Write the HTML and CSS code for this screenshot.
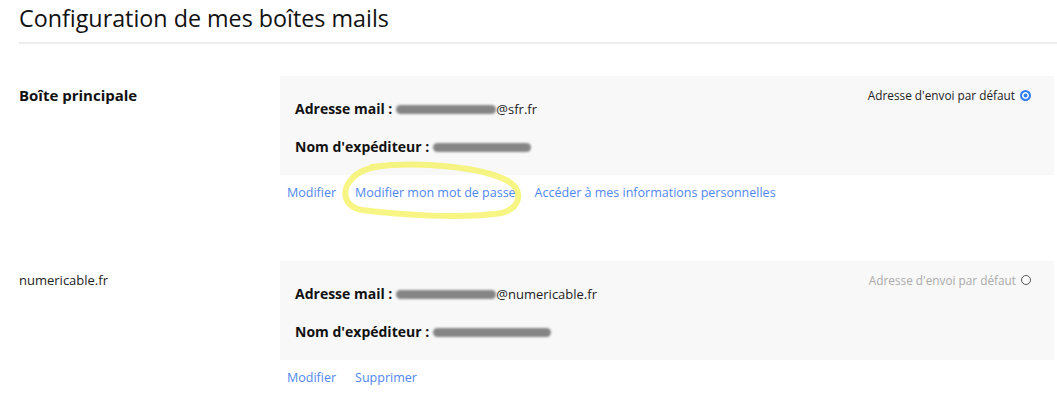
FILE: index.html
```html
<!DOCTYPE html>
<html lang="fr">
<head>
    <meta charset="UTF-8">
    <title>Configuration de mes boîtes mails</title>
    <link rel="stylesheet" href="styles.css">
</head>
<body>
<div class="page">
    <h1 class="page-title">Configuration de mes boîtes mails</h1>

    <section class="mailbox">
        <div class="mailbox-name main">Boîte principale</div>
        <div class="mailbox-body">
            <div class="card">
                <div class="fields">
                    <p class="field"><b>Adresse mail :</b> <span class="masked w100"></span>@sfr.fr</p>
                    <p class="field"><b>Nom d'expéditeur :</b> <span class="masked w98"></span></p>
                </div>
                <div class="default-choice">Adresse d'envoi par défaut <span class="radio checked"></span></div>
            </div>
            <div class="actions">
                <a href="#">Modifier</a>
                <a href="#">Modifier mon mot de passe</a>
                <a href="#">Accéder à mes informations personnelles</a>
            </div>
        </div>
    </section>

    <section class="mailbox">
        <div class="mailbox-name">numericable.fr</div>
        <div class="mailbox-body">
            <div class="card">
                <div class="fields">
                    <p class="field"><b>Adresse mail :</b> <span class="masked w100"></span>@numericable.fr</p>
                    <p class="field"><b>Nom d'expéditeur :</b> <span class="masked w118"></span></p>
                </div>
                <div class="default-choice off">Adresse d'envoi par défaut <span class="radio"></span></div>
            </div>
            <div class="actions">
                <a href="#">Modifier</a>
                <a href="#">Supprimer</a>
            </div>
        </div>
    </section>
</div>

<!-- surlignage à main levée -->
<svg class="scribble" width="1057" height="416" viewBox="0 0 1057 416">
    <path d="M372 167 C420 161 482 167 508 181 C523 190 522 207 502 213 C462 219 400 215 362 210 C341 206 343 188 351 180 C357 172 366 168 382 166"
          fill="none" stroke="#f4f25a" stroke-opacity="0.75" stroke-width="6" stroke-linecap="round"/>
</svg>
</body>
</html>
```

FILE: styles.css
```css
* {
    margin: 0;
    padding: 0;
    box-sizing: border-box;
}

body {
    font-family: "Open Sans", Arial, sans-serif;
    font-size: 13px;
    color: #222;
    background: #fff;
    overflow: hidden;
}

.page {
    padding-left: 19px;
}

.page-title {
    font-size: 23.3px;
    font-weight: 400;
    color: #111;
    line-height: 34px;
    padding-top: 1px;
    padding-bottom: 7px;
    border-bottom: 2px solid #ececec;
    margin-bottom: 32px;
}

.mailbox {
    display: flex;
    margin-bottom: 58px;
}

.mailbox:last-child {
    margin-bottom: 0;
}

.mailbox-name {
    width: 261px;
    flex-shrink: 0;
    line-height: 20px;
    padding-top: 9px;
}

.mailbox-name.main {
    font-weight: 700;
    font-size: 15px;
    color: #111;
}

.mailbox-body {
    flex: 1;
    margin-right: 3px;
}

.card {
    background: #f8f8f8;
    display: flex;
    justify-content: space-between;
    align-items: flex-start;
    padding: 9px 23px 18px 15px;
}

.fields {
    padding-top: 14px;
    display: flex;
    flex-direction: column;
    gap: 18px;
}

.field {
    line-height: 20px;
    display: flex;
    align-items: center;
}

.field b {
    font-size: 14px;
    color: #111;
    margin-right: 4px;
}

.masked {
    display: inline-block;
    height: 9px;
    background: #858585;
    border-radius: 5px;
    filter: blur(0.8px);
}

.w100 { width: 100px; }
.w98 { width: 98px; }
.w118 { width: 118px; }

.default-choice {
    font-size: 11.8px;
    line-height: 20px;
    display: flex;
    align-items: center;
    gap: 5px;
}

.default-choice.off {
    color: #aaa;
}

.radio {
    width: 10px;
    height: 10px;
    border-radius: 50%;
    border: 1px solid #555;
    background: #fff;
}

.radio.checked {
    width: 11px;
    height: 11px;
    border: 2px solid #2f7ef5;
    background: #2f7ef5;
    box-shadow: inset 0 0 0 1.5px #fff;
}

.actions {
    display: flex;
    gap: 19px;
    padding-left: 7px;
    margin-top: 8px;
    line-height: 20px;
    font-size: 12.5px;
}

.actions a {
    color: #4f87f2;
    text-decoration: none;
}

.scribble {
    position: absolute;
    left: 0;
    top: 0;
    pointer-events: none;
}
```
